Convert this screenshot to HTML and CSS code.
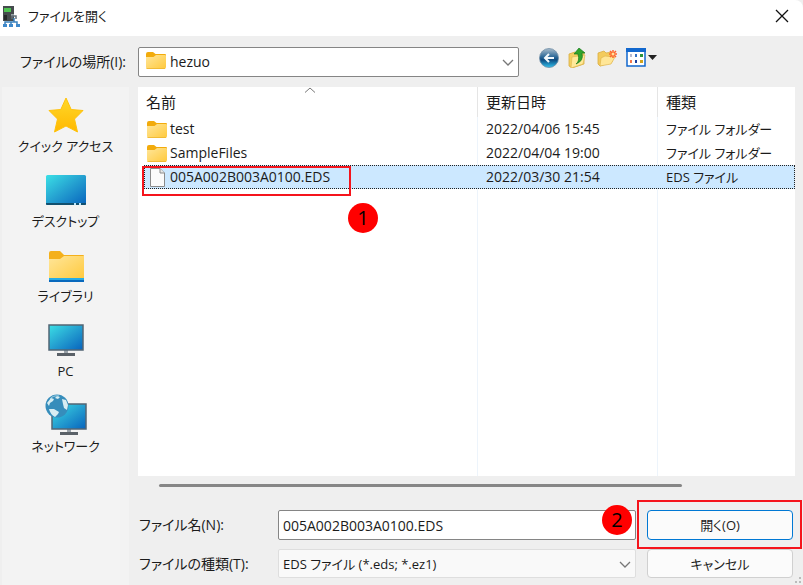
FILE: index.html
```html
<!doctype html>
<html lang="ja">
  <head>
    <meta charset="utf-8">
    <meta name="viewport" content="width=device-width, initial-scale=1">
    <title>ファイルを開く</title>
    <link rel="stylesheet" href="styles.css">
  </head>
  <body>
    <!-- shared shapes -->
    <svg class="defs" width="0" height="0" aria-hidden="true">
      <defs>
        <linearGradient id="folderFill" x1="0" y1="0" x2="1" y2="1">
          <stop offset="0" stop-color="#ffe69a"/>
          <stop offset="1" stop-color="#ffc93c"/>
        </linearGradient>
        <linearGradient id="screenFill" x1="0" y1="0" x2="1" y2="1">
          <stop offset="0" stop-color="#3be0e6"/>
          <stop offset=".5" stop-color="#249fd0"/>
          <stop offset="1" stop-color="#0763bd"/>
        </linearGradient>
        <linearGradient id="starFill" x1="0" y1="0" x2="0" y2="1">
          <stop offset="0" stop-color="#ffd829"/>
          <stop offset="1" stop-color="#ffb800"/>
        </linearGradient>
        <linearGradient id="backFill" x1="0" y1="0" x2="0" y2="1">
          <stop offset="0" stop-color="#a9bccb"/>
          <stop offset=".45" stop-color="#2b6797"/>
          <stop offset=".6" stop-color="#0c4a80"/>
          <stop offset="1" stop-color="#31c3ef"/>
        </linearGradient>
        <symbol id="folder" viewBox="0 0 20 17">
          <path d="M0 2Q0 0 2 0H7L9.500 2H19Q20 2 20 3V8H0z" fill="#f2ab0c"/>
          <path d="M0 5H7.500L10 3H19Q20 3 20 4V15Q20 17 18 17H1.500Q0 17 0 15z" fill="url(#folderFill)"/>
          <path d="M.5 16.500H19" stroke="#eeb52f" stroke-width=".8"/>
        </symbol>
      </defs>
    </svg>

    <div class="dialog">
      <header class="titlebar">
        <svg class="app-icon" width="19" height="21" viewBox="0 0 19 21" aria-hidden="true">
          <path d="M1 0H12V15H1z" fill="#454b4d"/>
          <path d="M2 2H9V6H2z" fill="#4fc452"/>
          <path d="M2 9H5V14H2z" fill="#252929"/>
          <path d="M9 8H12V10H9z" fill="#97a2a5"/>
          <path d="M10 13V10H14V13" fill="none" stroke="#64717b" stroke-width="1.500"/>
          <path d="M3 19V16H15V19M9 19V16M12 16V12" fill="none" stroke="#3b81bd" stroke-width="1.500"/>
          <path d="M1 18H5V21H1zM7 18H11V21H7zM14 18H18V21H14z" fill="#3e88ca"/>
        </svg>
        <h1>ファイルを開く</h1>
        <button class="close" type="button" aria-label="閉じる">
          <svg width="14" height="14" viewBox="0 0 14 14"><path d="M1 1L13 13M13 1L1 13" stroke="#111" stroke-width="1.300"/></svg>
        </button>
      </header>

      <div class="location">
        <label for="location">ファイルの場所(I):</label>
        <div class="combo combo-location">
          <svg class="combo-icon" width="20" height="17"><use href="#folder"/></svg>
          <select id="location"><option>hezuo</option></select>
          <svg class="chevron" width="12" height="8" viewBox="0 0 12 8"><path d="M1 1L6 6L11 1" fill="none" stroke="#777" stroke-width="1.300"/></svg>
        </div>
        <div class="tools">
          <button type="button" aria-label="戻る">
            <svg width="20" height="20" viewBox="0 0 20 20">
              <circle cx="10" cy="10" r="9.500" fill="url(#backFill)" stroke="#6f8da6" stroke-width=".8"/>
              <path d="M15 10H6M10 6L6 10L10 14" fill="none" stroke="#f2f8fc" stroke-width="2"/>
            </svg>
          </button>
          <button type="button" aria-label="上の階層へ">
            <svg width="20" height="20" viewBox="0 0 20 20">
              <path d="M1 6L7 4L9 6L16 4V16L4 20L1 18z" fill="#f3cf62" stroke="#d8ac41" stroke-width=".8"/>
              <path d="M4 9L17 7L15 16L3 20z" fill="#ffe999" stroke="#dfb64d" stroke-width=".6"/>
              <path d="M8 16Q12 13 10 6H6L11 0L17 5H14Q16 13 8 16z" fill="#2fa52c" stroke="#187a1d" stroke-width=".7"/>
            </svg>
          </button>
          <button type="button" aria-label="新しいフォルダー">
            <svg width="20" height="20" viewBox="0 0 20 20">
              <path d="M1 5L7 3L9 5L15 4V14L3 18L1 16z" fill="#f3cb5d" stroke="#dbad43" stroke-width=".8"/>
              <path d="M4 10L8 8L18 9L14 16L3 18z" fill="#ffe697" stroke="#e1b64d" stroke-width=".7"/>
              <path d="M16 2V10M12 6H20M13 3L19 9M19 3L13 9" stroke="#ff642c" stroke-width="1.500"/>
              <circle cx="16" cy="6" r="1.500" fill="#ffe39a"/>
            </svg>
          </button>
          <button type="button" aria-label="表示">
            <svg width="32" height="20" viewBox="0 0 32 20">
              <path d="M1 1H19V18H1z" fill="#fff" stroke="#1268ce" stroke-width="1.500"/>
              <path d="M0 0H20V4H0z" fill="#1268ce"/>
              <path d="M4 6H6V9H4z" fill="#b7b9ce"/><path d="M9 6H11V9H9z" fill="#3673c5"/><path d="M14 6H17V9H14z" fill="#29923c"/>
              <path d="M4 12H6V15H4z" fill="#f3764a"/><path d="M9 12H11V15H9z" fill="#1b3e9c"/><path d="M14 12H17V15H14z" fill="#d1a31b"/>
              <path d="M22 7H31L26.500 12z" fill="#222"/>
            </svg>
          </button>
        </div>
      </div>

      <div class="main">
        <nav class="places">
          <button type="button">
            <svg width="42" height="42" viewBox="0 0 42 42"><path d="M21 4L26.200 15.500L38 16.500L29.500 25L32.500 38L21 32L9.500 38L12.500 25L4 16.500L15.800 15.500z" fill="url(#starFill)" stroke="#ffc20b" stroke-linejoin="round"/></svg>
            クイック アクセス
          </button>
          <button type="button">
            <svg width="42" height="42" viewBox="0 0 42 42">
              <rect x="1" y="6" width="40" height="30" rx="1.500" fill="url(#screenFill)"/>
              <path d="M1 34H41V35Q41 36 40 36H2Q1 36 1 35z" fill="#12506f"/>
              <path d="M29 34H31V36H29zM34 34H36V36H34z" fill="#bbe7fc"/>
            </svg>
            デスクトップ
          </button>
          <button type="button">
            <svg width="42" height="42" viewBox="0 0 42 42">
              <path d="M4 9Q4 7 6 7H15L19 11H38Q39 11 39 12V18H4z" fill="#f4b01b"/>
              <path d="M4 15H15L19 12H39V36H4z" fill="url(#folderFill)"/>
              <path d="M4 34H39V36H4z" fill="#28ace5"/><path d="M4 36H39V38H4z" fill="#0869bd"/>
            </svg>
            ライブラリ
          </button>
          <button type="button">
            <svg width="42" height="42" viewBox="0 0 42 42">
              <path d="M19 30H23V36H19z" fill="#9aa3aa"/>
              <rect x="4" y="6" width="34" height="25" fill="url(#screenFill)" stroke="#536674" stroke-width="1.500"/>
              <path d="M12 34H30V37H12z" fill="#5a6168"/>
            </svg>
            PC
          </button>
          <button type="button">
            <svg width="42" height="42" viewBox="0 0 42 42">
              <path d="M22 34H26V40H22z" fill="#9aa3aa"/>
              <rect x="7" y="10" width="34" height="25" fill="url(#screenFill)" stroke="#536674" stroke-width="1.500"/>
              <path d="M15 38H33V41H15z" fill="#5a6168"/>
              <circle cx="12" cy="12" r="11.500" fill="#368dbb"/>
              <path d="M2 9L6 4L9 5L8 7L5 9L4 12zM12 2L15 3L13 5L10 4zM17 5L21 6L23 11L22 16L19 14L18 10zM4 15L9 15L14 18L13 20L10 23Q5 20 4 15z" fill="#d7edf2"/>
              <path d="M5 5Q8 1 14 2" fill="none" stroke="#9fd1e5"/>
            </svg>
            ネットワーク
          </button>
        </nav>

        <div class="content">
          <div class="file-list">
            <table>
              <colgroup><col class="col-name"><col class="col-date"><col class="col-type"></colgroup>
              <thead>
                <tr>
                  <th scope="col">名前
                    <svg class="sort" width="12" height="6" viewBox="0 0 12 6"><path d="M1 5.500L6 1L11 5.500" fill="none" stroke="#777"/></svg>
                  </th>
                  <th scope="col">更新日時</th>
                  <th scope="col">種類</th>
                </tr>
              </thead>
              <tbody>
                <tr>
                  <td><span class="file"><svg width="20" height="17"><use href="#folder"/></svg>test</span></td>
                  <td>2022/04/06 15:45</td>
                  <td>ファイル フォルダー</td>
                </tr>
                <tr>
                  <td><span class="file"><svg width="20" height="17"><use href="#folder"/></svg>SampleFiles</span></td>
                  <td>2022/04/04 19:00</td>
                  <td>ファイル フォルダー</td>
                </tr>
                <tr class="selected">
                  <td>
                    <span class="file"><svg width="20" height="19" viewBox="0 0 20 19"><path d="M3.500 .5H13L17.500 5V18.500H3.500z" fill="#fafafa" stroke="#8b8b8b"/><path d="M13 .5V5H17.500" fill="#e8e8e8" stroke="#8b8b8b"/></svg>005A002B003A0100.EDS</span>
                    <span class="callout callout-file"></span>
                    <span class="badge badge-file">1</span>
                  </td>
                  <td>2022/03/30 21:54</td>
                  <td>EDS ファイル</td>
                </tr>
                <tr class="rest" aria-hidden="true"><td></td><td></td><td></td></tr>
              </tbody>
            </table>
          </div>
          <div class="scrollbar"><div class="thumb"></div></div>

          <form class="fields">
            <label for="filename">ファイル名(N):</label>
            <input id="filename" type="text" value="005A002B003A0100.EDS">
            <div class="action">
              <button class="btn btn-primary" type="button">開く(O)</button>
              <span class="callout callout-open"></span>
              <span class="badge badge-open">2</span>
            </div>
            <label for="filetype">ファイルの種類(T):</label>
            <div class="combo combo-type">
              <select id="filetype"><option>EDS ファイル (*.eds; *.ez1)</option></select>
              <svg class="chevron" width="12" height="8" viewBox="0 0 12 8"><path d="M1 1L6 6L11 1" fill="none" stroke="#777" stroke-width="1.300"/></svg>
            </div>
            <button class="btn" type="button">キャンセル</button>
          </form>
        </div>
      </div>
      <svg class="grip" width="8" height="8" viewBox="0 0 8 8" aria-hidden="true"><path d="M4 0H6V2H4zM0 4H2V6H0zM4 4H6V6H4z" fill="#bbb"/></svg>
    </div>
  </body>
</html>
```
FILE: styles.css
```css
* {
  box-sizing: border-box;
}
body {
  margin: 0;
  background: #efefef;
  color: #1b1b1b;
  font-family: "Open Sans", "Noto Sans CJK JP", sans-serif;
  font-size: 14px;
  line-height: 20px;
  font-feature-settings: "palt";
}
button, input, select {
  font: inherit;
  font-feature-settings: inherit;
  color: inherit;
}
button {
  border: 0;
  padding: 0;
  background: none;
}
svg {
  display: block;
  flex: none;
}
.defs {
  position: absolute;
}
.dialog {
  position: relative;
  display: flex;
  flex-direction: column;
  min-height: 100vh;
}

/* title bar */
.titlebar {
  display: flex;
  align-items: center;
  height: 36px;
  padding: 0 14px 4px 2px;
  background: #fff;
  border-top-right-radius: 8px;
}
.titlebar h1 {
  flex: 1;
  margin: 0 0 0 7px;
  font-size: 13px;
  font-weight: 400;
}

/* location row */
.location {
  display: flex;
  align-items: center;
  height: 51px;
}
.location label {
  width: 138px;
  padding-right: 12px;
  text-align: right;
}
.combo {
  position: relative;
}
.combo-location {
  flex: 1;
}
.combo select {
  display: block;
  width: 100%;
  height: 30px;
  padding: 0 28px 0 4px;
  border: 1px solid #858585;
  border-radius: 2px;
  background: #fff;
  appearance: none;
}
.combo-location select {
  padding-left: 31px;
}
.combo-icon {
  position: absolute;
  left: 8px;
  top: 5px;
}
.chevron {
  position: absolute;
  right: 5px;
  top: 12px;
  pointer-events: none;
}
.tools {
  display: flex;
  gap: 9px;
  width: 284px;
  padding: 0 0 7px 20px;
}

/* places */
.main {
  flex: 1;
  display: flex;
}
.places {
  width: 127px;
  margin: 0 9px 0 2px;
  padding-top: 7px;
  background: #f3f3f3;
}
.places button {
  display: flex;
  flex-direction: column;
  align-items: center;
  width: 100%;
  height: 75px;
  font-size: 13px;
}

/* file list */
.content {
  flex: 1;
  min-width: 0;
  display: flex;
  flex-direction: column;
  padding: 0 8px 7px 0;
}
.file-list {
  flex: 1;
  display: flex;
  padding-left: 6px;
  background: #fff;
}
table {
  width: 100%;
  table-layout: fixed;
  border-spacing: 0;
}
.col-date {
  width: 180px;
}
.col-type {
  width: 137px;
}
th, td {
  height: 24px;
  padding: 0 0 0 8px;
  text-align: left;
  font-weight: 400;
  white-space: nowrap;
  border-right: 1px solid #edf4fb;
}
th:last-child, td:last-child {
  border-right: 0;
}
td:last-child {
  font-size: 13px;
}
th {
  position: relative;
  height: 30px;
  font-size: 15px;
  border-right-color: #e5e5e5;
}
th:first-child {
  padding-left: 2px;
}
td:first-child {
  position: relative;
  padding-left: 3px;
}
.sort {
  position: absolute;
  left: 48%;
  top: 0;
}
.file {
  display: flex;
  align-items: center;
  gap: 3px;
}
.selected {
  background: #cce8ff;
  outline: 1px dotted #222;
  outline-offset: -1px;
}
.selected td {
  border-color: #cce8ff;
}
.rest td {
  height: auto;
}
.scrollbar {
  padding: 8px 113px 0 21px;
  height: 24px;
}
.thumb {
  height: 3px;
  border-radius: 2px;
  background: #868686;
}

/* name, type and buttons */
.fields {
  display: grid;
  grid-template-columns: 129px 1fr 146px;
  column-gap: 11px;
  row-gap: 9px;
  align-items: center;
  margin: 10px 2px 0 0;
}
.fields label {
  padding-left: 1px;
}
.fields input {
  width: 100%;
  height: 30px;
  padding: 0 4px;
  border: 1px solid #858585;
  border-radius: 2px;
  background: #fff;
}
.combo-type select {
  height: 29px;
  border-color: #dedede;
  background: #f9f9f9;
  font-size: 13px;
}
.action {
  position: relative;
}
.btn {
  display: block;
  width: 100%;
  height: 29px;
  border: 1px solid #d0d0d0;
  border-radius: 4px;
  background: #fbfbfb;
  font-size: 13px;
}
.btn-primary {
  height: 30px;
  border-color: #0078d4;
}

/* step callouts */
.callout {
  position: absolute;
  border: 2px solid #f5141c;
  pointer-events: none;
}
.callout-file {
  left: -2px;
  top: 1px;
  width: 209px;
  height: 30px;
}
.callout-open {
  inset: -10px -9px -9px -10px;
}
.badge {
  position: absolute;
  width: 30px;
  height: 30px;
  border-radius: 50%;
  background: #f00;
  color: #000;
  font-size: 20px;
  line-height: 30px;
  text-align: center;
}
.badge-file {
  left: 204px;
  top: 38px;
}
.badge-open {
  left: -45px;
  top: -5px;
}
.grip {
  position: absolute;
  right: 0;
  bottom: 0;
}
```
